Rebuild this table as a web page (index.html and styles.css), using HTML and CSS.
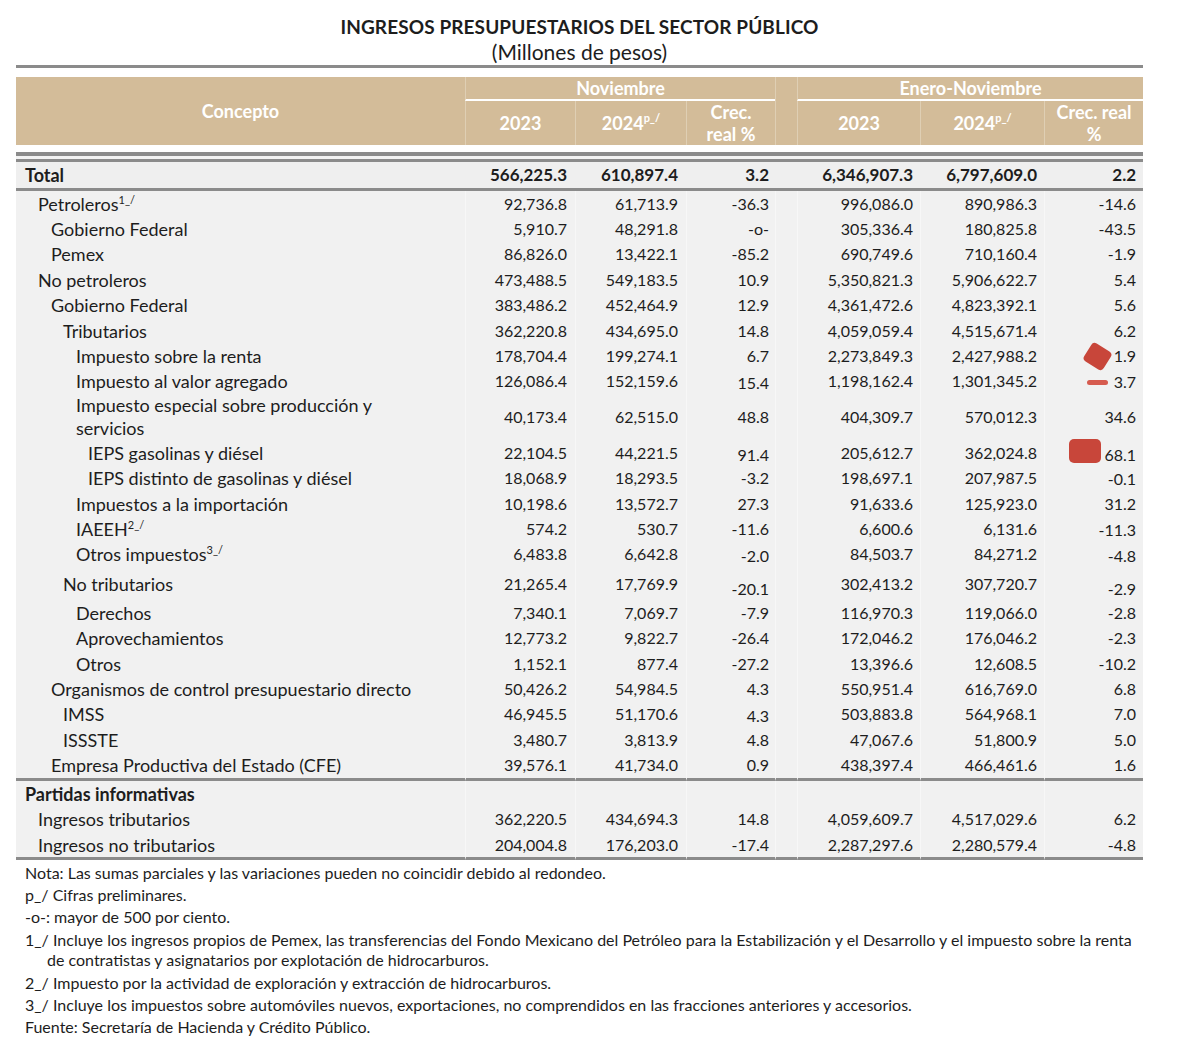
FILE: index.html
```html
<!DOCTYPE html>
<html lang="es">
<head>
<meta charset="utf-8">
<title>Ingresos presupuestarios del sector público</title>
<link rel="stylesheet" href="styles.css">
</head>
<body>
<div class="page">
  <h1 class="title">INGRESOS PRESUPUESTARIOS DEL SECTOR PÚBLICO</h1>
  <p class="subtitle">(Millones de pesos)</p>
  <div class="rule"></div>
  <table class="tbl">
    <colgroup>
      <col class="w-concept"><col class="w-a"><col class="w-b"><col class="w-c"><col class="w-gap"><col class="w-d"><col class="w-e"><col class="w-f">
    </colgroup>
    <thead>
      <tr class="h1">
        <th rowspan="2" class="concept">Concepto</th>
        <th colspan="3" class="grp">Noviembre</th>
        <th rowspan="2" class="gap"></th>
        <th colspan="3" class="grp">Enero-Noviembre</th>
      </tr>
      <tr class="h2">
        <th>2023</th>
        <th>2024<sup>p_/</sup></th>
        <th>Crec.<br>real %</th>
        <th>2023</th>
        <th>2024<sup>p_/</sup></th>
        <th>Crec. real<br>%</th>
      </tr>
    </thead>
    <tbody class="top">
      <tr class="sep"><td colspan="8"></td></tr>
      <tr class="total"><td class="c l0">Total</td><td>566,225.3</td><td>610,897.4</td><td>3.2</td><td></td><td>6,346,907.3</td><td>6,797,609.0</td><td>2.2</td></tr>
    </tbody>
    <tbody class="body">
      <tr><td class="c l1">Petroleros<sup>1_/</sup></td><td>92,736.8</td><td>61,713.9</td><td>-36.3</td><td></td><td>996,086.0</td><td>890,986.3</td><td>-14.6</td></tr>
      <tr><td class="c l2">Gobierno Federal</td><td>5,910.7</td><td>48,291.8</td><td>-o-</td><td></td><td>305,336.4</td><td>180,825.8</td><td>-43.5</td></tr>
      <tr><td class="c l2">Pemex</td><td>86,826.0</td><td>13,422.1</td><td>-85.2</td><td></td><td>690,749.6</td><td>710,160.4</td><td>-1.9</td></tr>
      <tr><td class="c l1">No petroleros</td><td>473,488.5</td><td>549,183.5</td><td>10.9</td><td></td><td>5,350,821.3</td><td>5,906,622.7</td><td>5.4</td></tr>
      <tr><td class="c l2">Gobierno Federal</td><td>383,486.2</td><td>452,464.9</td><td>12.9</td><td></td><td>4,361,472.6</td><td>4,823,392.1</td><td>5.6</td></tr>
      <tr><td class="c l3">Tributarios</td><td>362,220.8</td><td>434,695.0</td><td>14.8</td><td></td><td>4,059,059.4</td><td>4,515,671.4</td><td>6.2</td></tr>
      <tr><td class="c l4">Impuesto sobre la renta</td><td>178,704.4</td><td>199,274.1</td><td>6.7</td><td></td><td>2,273,849.3</td><td>2,427,988.2</td><td>1.9</td></tr>
      <tr><td class="c l4">Impuesto al valor agregado</td><td>126,086.4</td><td>152,159.6</td><td class="lo">15.4</td><td></td><td>1,198,162.4</td><td>1,301,345.2</td><td class="lo1">3.7</td></tr>
      <tr class="double"><td class="c l4">Impuesto especial sobre producción y<br>servicios</td><td>40,173.4</td><td>62,515.0</td><td>48.8</td><td></td><td>404,309.7</td><td>570,012.3</td><td>34.6</td></tr>
      <tr><td class="c l5">IEPS gasolinas y diésel</td><td>22,104.5</td><td>44,221.5</td><td class="lo">91.4</td><td></td><td>205,612.7</td><td>362,024.8</td><td class="lo">68.1</td></tr>
      <tr><td class="c l5">IEPS distinto de gasolinas y diésel</td><td>18,068.9</td><td>18,293.5</td><td>-3.2</td><td></td><td>198,697.1</td><td>207,987.5</td><td class="lo1">-0.1</td></tr>
      <tr><td class="c l4">Impuestos a la importación</td><td>10,198.6</td><td>13,572.7</td><td>27.3</td><td></td><td>91,633.6</td><td>125,923.0</td><td>31.2</td></tr>
      <tr><td class="c l4">IAEEH<sup>2_/</sup></td><td>574.2</td><td>530.7</td><td>-11.6</td><td></td><td>6,600.6</td><td>6,131.6</td><td class="lo1">-11.3</td></tr>
      <tr><td class="c l4">Otros impuestos<sup>3_/</sup></td><td>6,483.8</td><td>6,642.8</td><td class="lo">-2.0</td><td></td><td>84,503.7</td><td>84,271.2</td><td class="lo">-4.8</td></tr>
      <tr class="tall"><td class="c l3">No tributarios</td><td>21,265.4</td><td>17,769.9</td><td class="lo2">-20.1</td><td></td><td>302,413.2</td><td>307,720.7</td><td class="lo2">-2.9</td></tr>
      <tr><td class="c l4">Derechos</td><td>7,340.1</td><td>7,069.7</td><td>-7.9</td><td></td><td>116,970.3</td><td>119,066.0</td><td>-2.8</td></tr>
      <tr><td class="c l4">Aprovechamientos</td><td>12,773.2</td><td>9,822.7</td><td>-26.4</td><td></td><td>172,046.2</td><td>176,046.2</td><td>-2.3</td></tr>
      <tr><td class="c l4">Otros</td><td>1,152.1</td><td>877.4</td><td>-27.2</td><td></td><td>13,396.6</td><td>12,608.5</td><td>-10.2</td></tr>
      <tr><td class="c l2">Organismos de control presupuestario directo</td><td>50,426.2</td><td>54,984.5</td><td>4.3</td><td></td><td>550,951.4</td><td>616,769.0</td><td>6.8</td></tr>
      <tr><td class="c l3">IMSS</td><td>46,945.5</td><td>51,170.6</td><td class="lo">4.3</td><td></td><td>503,883.8</td><td>564,968.1</td><td>7.0</td></tr>
      <tr><td class="c l3">ISSSTE</td><td>3,480.7</td><td>3,813.9</td><td>4.8</td><td></td><td>47,067.6</td><td>51,800.9</td><td>5.0</td></tr>
      <tr class="last"><td class="c l2">Empresa Productiva del Estado (CFE)</td><td>39,576.1</td><td>41,734.0</td><td>0.9</td><td></td><td>438,397.4</td><td>466,461.6</td><td>1.6</td></tr>
    </tbody>
    <tbody class="body info">
      <tr class="bold"><td class="c l0">Partidas informativas</td><td></td><td></td><td></td><td></td><td></td><td></td><td></td></tr>
      <tr><td class="c l1">Ingresos tributarios</td><td>362,220.5</td><td>434,694.3</td><td>14.8</td><td></td><td>4,059,609.7</td><td>4,517,029.6</td><td>6.2</td></tr>
      <tr class="last"><td class="c l1">Ingresos no tributarios</td><td>204,004.8</td><td>176,203.0</td><td>-17.4</td><td></td><td>2,287,297.6</td><td>2,280,579.4</td><td>-4.8</td></tr>
    </tbody>
  </table>
  <div class="notes">
    <p>Nota: Las sumas parciales y las variaciones pueden no coincidir debido al redondeo.</p>
    <p>p_/ Cifras preliminares.</p>
    <p>-o-: mayor de 500 por ciento.</p>
    <p class="hang">1_/ Incluye los ingresos propios de Pemex, las transferencias del Fondo Mexicano del Petróleo para la Estabilización y el Desarrollo y el impuesto sobre la renta<br>de contratistas y asignatarios por explotación de hidrocarburos.</p>
    <p>2_/ Impuesto por la actividad de exploración y extracción de hidrocarburos.</p>
    <p>3_/ Incluye los impuestos sobre automóviles nuevos, exportaciones, no comprendidos en las fracciones anteriores y accesorios.</p>
    <p>Fuente: Secretaría de Hacienda y Crédito Público.</p>
  </div>
  <span class="mark m1"></span>
  <span class="mark m2"></span>
  <span class="mark m3"></span>
</div>
</body>
</html>
```
FILE: styles.css
```css
html, body {
  margin: 0;
  padding: 0;
  background: #ffffff;
}
body {
  font-family: Lato, "Open Sans", "DejaVu Sans", sans-serif;
  color: #1d1d1d;
}
.page {
  position: relative;
  width: 1179px;
  height: 1046px;
  box-sizing: border-box;
  padding: 16px 36px 0 16px;
  overflow: hidden;
}
.title {
  margin: 0;
  height: 22px;
  line-height: 22px;
  text-align: center;
  font-size: 19px;
  font-weight: 700;
  letter-spacing: 0.1px;
}
.subtitle {
  margin: 3px 0 0;
  height: 22px;
  line-height: 22px;
  text-align: center;
  font-size: 21px;
  font-weight: 400;
}
.rule {
  margin-top: 2px;
  height: 3px;
  background: #8b8b8b;
  margin-bottom: 9px;
}
.tbl {
  width: 1127px;
  table-layout: fixed;
  border-collapse: separate;
  border-spacing: 0;
}
.w-concept { width: 449px; }
.w-a { width: 110px; }
.w-b { width: 111px; }
.w-c { width: 89px; }
.w-gap { width: 22px; }
.w-d { width: 123px; }
.w-e { width: 124px; }
.w-f { width: 99px; }

thead th {
  background: #d3bc99;
  color: #ffffff;
  font-size: 18px;
  font-weight: 700;
  line-height: 22px;
  padding: 0;
  text-align: center;
  vertical-align: middle;
  border-left: 1px solid #dfcfb4;
}
thead th.concept { border-left: none; }
.h1 { height: 24px; }
.h1 th.grp { border-bottom: 2px solid #ffffff; }
.h2 { height: 44px; }
thead sup {
  font-size: 11px;
  line-height: 0;
  vertical-align: 8px;
  font-weight: 700;
}

.tbl tr.sep { height: 17px; }
.tbl tr.sep td {
  padding: 0;
  font-size: 0;
  line-height: 0;
  background: linear-gradient(to bottom,
    #ffffff 0, #ffffff 7px,
    #8b8b8b 7px, #8b8b8b 11px,
    #f3f3f3 11px, #f3f3f3 14px,
    #8b8b8b 14px, #8b8b8b 17px);
}

.top tr.total { height: 29px; }
.top .total td {
  background: #efefef;
  font-size: 17px;
  font-weight: 700;
  line-height: 20px;
  border-bottom: 3px solid #8b8b8b;
}
.top .total td.c { font-size: 18px; }

.tbl td {
  padding: 0 8px 0 0;
  text-align: right;
  vertical-align: middle;
  white-space: nowrap;
}
.tbl td:nth-child(4) { padding-right: 6px; }
.tbl td:nth-child(6),
.tbl td:nth-child(7),
.tbl td:nth-child(8) { padding-right: 7px; }
.tbl td.c {
  text-align: left;
  padding-right: 0;
  font-size: 18px;
}
.body tr { height: 25.4px; }
.body td {
  background: #f1f1f1;
  font-size: 16px;
  line-height: 20px;
  border-left: 1px solid #f7f7f7;
}
.body td.c { border-left: none; }
.body tr.double { height: 46px; }
.body tr.double td.c { line-height: 23px; }
.body tr.tall { height: 33px; }
.body tr.last { height: 28.4px; }
.body tr.last td { border-bottom: 3px solid #8b8b8b; }
.info tr { height: 25.5px; }
.info tr.last { height: 28.5px; }
.body tr.bold td { font-weight: 700; }

.l0 { padding-left: 9px !important; }
.l1 { padding-left: 22px !important; }
.l2 { padding-left: 35px !important; }
.l3 { padding-left: 47px !important; }
.l4 { padding-left: 60px !important; }
.l5 { padding-left: 72px !important; }

.tbl td.lo { padding-top: 4px; }
.tbl td.lo1 { padding-top: 2px; }
.tbl td.lo2 { padding-top: 10px; }

.tbl td sup {
  font-size: 11px;
  line-height: 0;
  vertical-align: 7px;
}

.notes {
  padding: 2px 0 0 9px;
  font-size: 16px;
  color: #1d1d1d;
}
.notes p {
  margin: 0;
  line-height: 22px;
  white-space: nowrap;
}
.notes p.hang {
  line-height: 20px;
  padding: 2px 0 2px 22px;
  text-indent: -22px;
}

.mark {
  position: absolute;
  display: block;
  background: #c8463a;
}
.m1 {
  left: 1086px;
  top: 346px;
  width: 23px;
  height: 21px;
  border-radius: 4px;
  transform: rotate(32deg);
}
.m2 {
  left: 1087px;
  top: 380px;
  width: 21px;
  height: 5px;
  border-radius: 3px;
  background: #d65b4f;
}
.m3 {
  left: 1069px;
  top: 439px;
  width: 32px;
  height: 24px;
  border-radius: 5px;
}
```
